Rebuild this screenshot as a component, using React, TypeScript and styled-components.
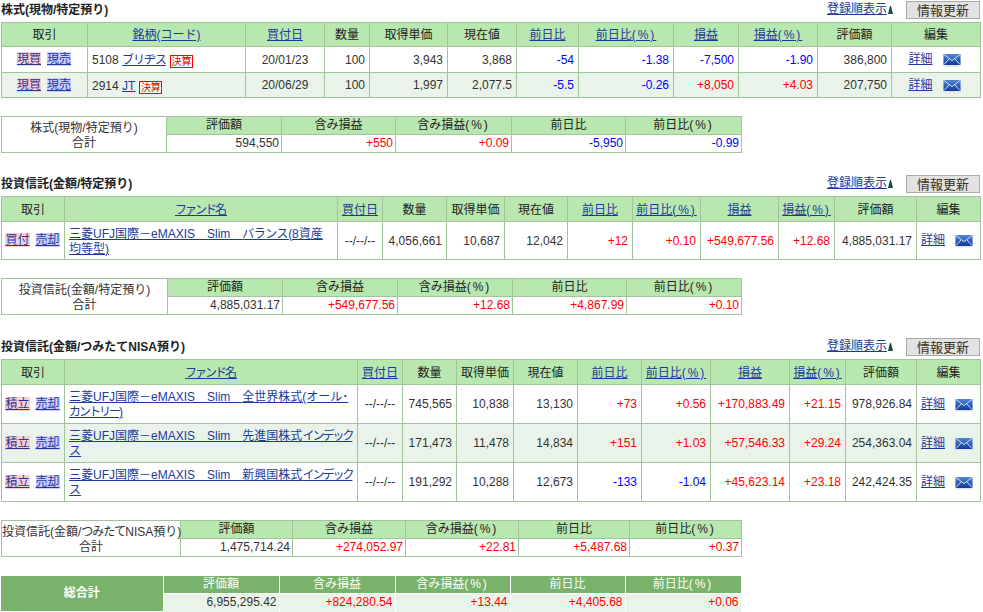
import React from "react";
import styled, { createGlobalStyle, css } from "styled-components";

const Global = createGlobalStyle`
  html, body { margin: 0; padding: 0; background: #fff; overflow: hidden; }
  body { font-family: "Liberation Sans", "Noto Sans CJK JP", sans-serif; font-size: 12px; line-height: 15px; color: #333; }
`;

const LINK = "#1c3a9c";
const BORDER = "#a2c49c";
const HEAD_BG = "#b9e7b0";
const ALT_BG = "#e9f3e9";

const Page = styled.div`
  width: 983px;
  height: 612px;
  overflow: hidden;
  padding: 1px 0 0 1px;
  box-sizing: border-box;
`;
const SectionHead = styled.div<{ $top: number }>`
  display: flex;
  align-items: center;
  width: 979px;
  height: 18px;
  margin-top: ${(p) => p.$top}px;
  margin-bottom: 3px;
`;
const Title = styled.h2`
  margin: 0;
  font-size: 12px;
  font-weight: 700;
  color: #222;
`;
const SortArea = styled.div`
  margin-left: auto;
  display: flex;
  align-items: center;
  gap: 1px;
  margin-top: -1px;
`;
const PlainLink = styled.a`
  color: ${LINK};
  text-decoration: underline;
  cursor: pointer;
`;
const RefreshButton = styled.button`
  width: 74px;
  height: 18px;
  margin-left: 13px;
  padding: 1px 0 0;
  border: 1px solid #aaa;
  background: #e2e2e2;
  color: #3c3020;
  font: 13px/15px "Liberation Sans", "Noto Sans CJK JP", sans-serif;
`;
const Narrow = styled.span<{ $by: number }>`
  letter-spacing: ${(p) => -p.$by}px;
`;
const Pct = styled.span`
  letter-spacing: 2px;
`;
const Table = styled.table<{ $w: number; $top?: number }>`
  border-collapse: collapse;
  table-layout: fixed;
  width: ${(p) => p.$w}px;
  margin-top: ${(p) => p.$top ?? 0}px;
`;
const HeadRow = styled.tr<{ $h: number }>`
  height: ${(p) => p.$h}px;
`;
const BodyRow = styled.tr<{ $h: number; $alt?: boolean }>`
  height: ${(p) => p.$h}px;
  background: ${(p) => (p.$alt ? ALT_BG : "#fff")};
`;
const HeadCell = styled.th`
  padding: 0;
  border: 1px solid ${BORDER};
  background: ${HEAD_BG};
  font-weight: 400;
  color: #222;
  text-align: center;
  white-space: nowrap;
  overflow: hidden;
`;
const ColumnHead = styled(HeadCell)`
  padding-top: 2px;
`;
const gainColor = css<{ $tone?: "pos" | "neg" }>`
  color: ${(p) => (p.$tone === "pos" ? "#ff0000" : p.$tone === "neg" ? "#0000ff" : "#333")};
`;
const NumCell = styled.td<{ $tone?: "pos" | "neg" }>`
  padding: 1px 4px 0 0;
  border: 1px solid ${BORDER};
  text-align: right;
  white-space: nowrap;
  ${gainColor}
`;
const DateCell = styled.td`
  padding: 1px 0 0;
  border: 1px solid ${BORDER};
  text-align: center;
  white-space: nowrap;
`;
const ActionCell = styled.td`
  padding: 0 1px 0 0;
  border: 1px solid ${BORDER};
  text-align: center;
  white-space: nowrap;
`;
const ActionLink = styled.a<{ $kind: "buy" | "sell" }>`
  color: ${LINK};
  text-decoration: underline;
  background: ${(p) => (p.$kind === "buy" ? "#ffcccc" : "#ccccff")};
  & + & { margin-left: 6px; }
`;
const NameCell = styled.td`
  padding: 2px 0 0 4px;
  border: 1px solid ${BORDER};
  text-align: left;
  white-space: nowrap;
  overflow: hidden;
`;
const SettleBadge = styled.span`
  display: inline-block;
  box-sizing: border-box;
  width: 23px;
  height: 13px;
  margin-left: 4px;
  border: 1px solid #f00;
  background: #fff;
  color: #d00;
  font-size: 10px;
  line-height: 11px;
  text-align: center;
  vertical-align: -1px;
`;
const EditCell = styled.td`
  padding: 0 3px 0 0;
  border: 1px solid ${BORDER};
  text-align: center;
  white-space: nowrap;
`;
const MailSvg = styled.svg`
  margin-left: 10px;
  vertical-align: -4px;
`;
const LabelCell = styled.td`
  padding: 4px 0 0;
  border: 1px solid ${BORDER};
  background: #fff;
  text-align: center;
  vertical-align: top;
  white-space: nowrap;
`;
const SumNum = styled(NumCell)`
  padding: 0 2px 0 0;
`;
const GrandLabel = styled.td`
  padding: 0;
  border: 1px solid #fff;
  border-left: 0;
  background: #78b26b;
  color: #fff;
  font-weight: 700;
  text-align: center;
`;
const GrandHead = styled.th`
  padding: 0;
  border: 1px solid #fff;
  background: #78b26b;
  color: #fff;
  font-weight: 400;
  text-align: center;
  white-space: nowrap;
`;
const GrandNum = styled.td<{ $tone?: "pos" | "neg" }>`
  padding: 0 2px 0 0;
  border: 1px solid #fff;
  border-bottom: 0;
  background: ${ALT_BG};
  text-align: right;
  ${gainColor}
`;
const Col = styled.col<{ $w: number }>`
  width: ${(p) => p.$w}px;
`;

const tone = (v: string): "pos" | "neg" | undefined =>
  v.startsWith("+") ? "pos" : v.startsWith("-") ? "neg" : undefined;

const Cols = ({ edges }: { edges: number[] }) => (
  <colgroup>
    {edges.slice(1).map((e, i) => (
      <Col key={i} $w={e - edges[i]} />
    ))}
  </colgroup>
);

const Mail = () => (
  <MailSvg width="18" height="14" viewBox="0 0 18 14">
    <defs>
      <linearGradient id="mailFill" x1="0" y1="0" x2="0" y2="1">
        <stop offset="0" stopColor="#4f86d8" />
        <stop offset="1" stopColor="#123a9a" />
      </linearGradient>
    </defs>
    <rect x="0.5" y="1" width="17" height="12.5" fill="#dfe8f2" />
    <rect x="0.5" y="1" width="17" height="11" fill="url(#mailFill)" />
    <path d="M1 1.5 L9 7.5 L17 1.5 M1 11.5 L6 6 M17 11.5 L12 6" fill="none" stroke="#cfe0f7" strokeWidth="1" />
  </MailSvg>
);

const Arrow = () => (
  <svg width="5" height="8" viewBox="0 0 5 8">
    <path d="M2 0 H3 L5 8 H0 Z" fill="#1a4d3f" />
  </svg>
);

const Head = ({ title, top }: { title: string; top: number }) => (
  <SectionHead $top={top}>
    <Title>{title}</Title>
    <SortArea>
      <PlainLink>登録順表示</PlainLink>
      <Arrow />
    </SortArea>
    <RefreshButton>情報更新</RefreshButton>
  </SectionHead>
);

type Row = {
  actions: [string, string];
  name: React.ReactNode;
  date: string;
  nums: string[];
  h: number;
  alt?: boolean;
};

const FundHead = () => (
  <>
    <Narrow $by={2}>ファンド</Narrow>名
  </>
);

const Holdings = ({
  edges,
  nameHead,
  headH,
  rows,
}: {
  edges: number[];
  nameHead: React.ReactNode;
  headH: number;
  rows: Row[];
}) => (
  <Table $w={edges[edges.length - 1] - edges[0]}>
    <Cols edges={edges} />
    <thead>
      <HeadRow $h={headH}>
        <ColumnHead>取引</ColumnHead>
        <ColumnHead><PlainLink>{nameHead}</PlainLink></ColumnHead>
        <ColumnHead><PlainLink>買付日</PlainLink></ColumnHead>
        <ColumnHead>数量</ColumnHead>
        <ColumnHead>取得単価</ColumnHead>
        <ColumnHead>現在値</ColumnHead>
        <ColumnHead><PlainLink>前日比</PlainLink></ColumnHead>
        <ColumnHead><PlainLink>前日比<Pct>(%)</Pct></PlainLink></ColumnHead>
        <ColumnHead><PlainLink>損益</PlainLink></ColumnHead>
        <ColumnHead><PlainLink>損益<Pct>(%)</Pct></PlainLink></ColumnHead>
        <ColumnHead>評価額</ColumnHead>
        <ColumnHead>編集</ColumnHead>
      </HeadRow>
    </thead>
    <tbody>
      {rows.map((r, i) => (
        <BodyRow key={i} $h={r.h} $alt={r.alt}>
          <ActionCell>
            <ActionLink $kind="buy">{r.actions[0]}</ActionLink>
            <ActionLink $kind="sell">{r.actions[1]}</ActionLink>
          </ActionCell>
          <NameCell>{r.name}</NameCell>
          <DateCell>{r.date}</DateCell>
          {r.nums.map((n, j) => (
            <NumCell key={j} $tone={j >= 3 && j <= 6 ? tone(n) : undefined}>{n}</NumCell>
          ))}
          <EditCell>
            <PlainLink>詳細</PlainLink>
            <Mail />
          </EditCell>
        </BodyRow>
      ))}
    </tbody>
  </Table>
);

const SUM_HEADS: { key: string; node: React.ReactNode }[] = [
  { key: "a", node: "評価額" },
  { key: "b", node: "含み損益" },
  { key: "c", node: <>含み損益<Pct>(%)</Pct></> },
  { key: "d", node: "前日比" },
  { key: "e", node: <>前日比<Pct>(%)</Pct></> },
];

const Summary = ({
  edges,
  label,
  values,
}: {
  edges: number[];
  label: React.ReactNode;
  values: string[];
}) => (
  <Table $w={edges[edges.length - 1] - edges[0]} $top={18}>
    <Cols edges={edges} />
    <tbody>
      <HeadRow $h={18}>
        <LabelCell rowSpan={2}>
          {label}
          <br />
          合計
        </LabelCell>
        {SUM_HEADS.map((h) => (
          <HeadCell key={h.key}>{h.node}</HeadCell>
        ))}
      </HeadRow>
      <BodyRow $h={18}>
        {values.map((v, i) => (
          <SumNum key={i} $tone={i > 0 ? tone(v) : undefined}>{v}</SumNum>
        ))}
      </BodyRow>
    </tbody>
  </Table>
);

const Fund = ({ a, b }: { a: React.ReactNode; b: React.ReactNode }) => (
  <PlainLink>
    三菱UFJ国際－eMAXIS　Slim　{a}
    <br />
    {b}
  </PlainLink>
);

const GRAND_EDGES = [1, 163, 279, 395, 510, 625, 741];

export default function App() {
  return (
    <Page>
      <Global />
      <Head title="株式(現物/特定預り)" top={0} />
      <Holdings
        edges={[1, 87, 245, 324, 369, 447, 516, 578, 673, 738, 817, 891, 980]}
        nameHead="銘柄(コード)"
        headH={24}
        rows={[
          {
            actions: ["現買", "現売"],
            name: (<>5108 <PlainLink><Narrow $by={1}>ブリヂス</Narrow></PlainLink><SettleBadge>決算</SettleBadge></>),
            date: "20/01/23",
            nums: ["100", "3,943", "3,868", "-54", "-1.38", "-7,500", "-1.90", "386,800"],
            h: 26,
          },
          {
            actions: ["現買", "現売"],
            name: (<>2914 <PlainLink>JT</PlainLink><SettleBadge>決算</SettleBadge></>),
            date: "20/06/29",
            nums: ["100", "1,997", "2,077.5", "-5.5", "-0.26", "+8,050", "+4.03", "207,750"],
            h: 25,
            alt: true,
          },
        ]}
      />
      <Summary
        edges={[1, 166, 281, 395, 511, 625, 741]}
        label="株式(現物/特定預り)"
        values={["594,550", "+550", "+0.09", "-5,950", "-0.99"]}
      />
      <Head title="投資信託(金額/特定預り)" top={22} />
      <Holdings
        edges={[1, 64, 337, 382, 446, 504, 567, 632, 700, 778, 834, 916, 980]}
        nameHead={<FundHead />}
        headH={25}
        rows={[
          {
            actions: ["買付", "売却"],
            name: <Fund a={<><Narrow $by={0.5}>バランス</Narrow>(8資産</>} b="均等型)" />,
            date: "--/--/--",
            nums: ["4,056,661", "10,687", "12,042", "+12", "+0.10", "+549,677.56", "+12.68", "4,885,031.17"],
            h: 38,
          },
        ]}
      />
      <Summary
        edges={[1, 167, 282, 397, 512, 626, 741]}
        label="投資信託(金額/特定預り)"
        values={["4,885,031.17", "+549,677.56", "+12.68", "+4,867.99", "+0.10"]}
      />
      <Head title="投資信託(金額/つみたてNISA預り)" top={23} />
      <Holdings
        edges={[1, 64, 357, 402, 456, 513, 577, 641, 710, 789, 845, 916, 980]}
        nameHead={<FundHead />}
        headH={25}
        rows={[
          {
            actions: ["積立", "売却"],
            name: <Fund a="全世界株式(オール･" b={<><Narrow $by={2}>カントリー</Narrow>)</>} />,
            date: "--/--/--",
            nums: ["745,565", "10,838", "13,130", "+73", "+0.56", "+170,883.49", "+21.15", "978,926.84"],
            h: 39,
          },
          {
            actions: ["積立", "売却"],
            name: <Fund a={<>先進国株式<Narrow $by={2}>インデック</Narrow></>} b="ス" />,
            date: "--/--/--",
            nums: ["171,473", "11,478", "14,834", "+151", "+1.03", "+57,546.33", "+29.24", "254,363.04"],
            h: 39,
            alt: true,
          },
          {
            actions: ["積立", "売却"],
            name: <Fund a={<>新興国株式<Narrow $by={2}>インデック</Narrow></>} b="ス" />,
            date: "--/--/--",
            nums: ["191,292", "10,288", "12,673", "-133", "-1.04", "+45,623.14", "+23.18", "242,424.35"],
            h: 39,
          },
        ]}
      />
      <Summary
        edges={[1, 180, 292, 405, 518, 629, 741]}
        label={<>投資信託(金額/<Narrow $by={1}>つみたて</Narrow>NISA預り)</>}
        values={["1,475,714.24", "+274,052.97", "+22.81", "+5,487.68", "+0.37"]}
      />
      <Table $w={740} $top={18}>
        <Cols edges={GRAND_EDGES} />
        <tbody>
          <HeadRow $h={18}>
            <GrandLabel rowSpan={2}>総合計</GrandLabel>
            {SUM_HEADS.map((h) => (
              <GrandHead key={h.key}>{h.node}</GrandHead>
            ))}
          </HeadRow>
          <HeadRow $h={18}>
            {["6,955,295.42", "+824,280.54", "+13.44", "+4,405.68", "+0.06"].map((v, i) => (
              <GrandNum key={i} $tone={i > 0 ? tone(v) : undefined}>{v}</GrandNum>
            ))}
          </HeadRow>
        </tbody>
      </Table>
    </Page>
  );
}
